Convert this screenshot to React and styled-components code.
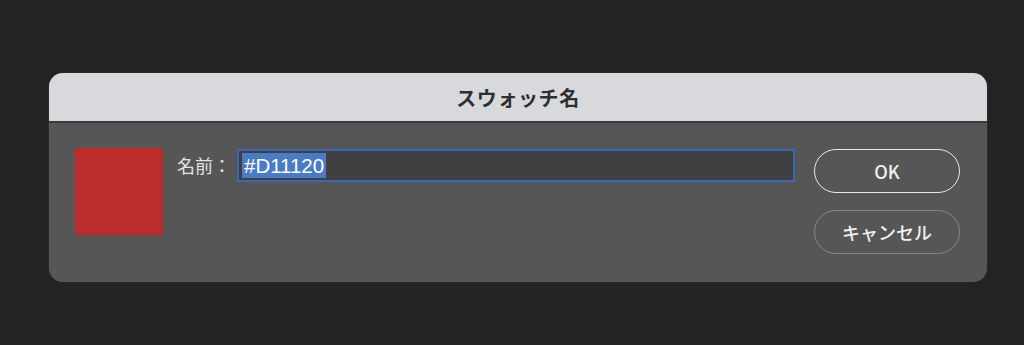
import styled, { createGlobalStyle } from "styled-components";

const Global = createGlobalStyle`
  html, body {
    margin: 0;
    padding: 0;
    background: #232323;
    font-family: "Noto Sans CJK JP", "Noto Sans", sans-serif;
  }
`;

const Page = styled.div`
  width: 1024px;
  height: 345px;
  padding: 73px 37px 0 49px;
  box-sizing: border-box;
`;

const Dialog = styled.div`
  width: 938px;
  height: 209px;
  border-radius: 14px;
  overflow: hidden;
  background: #565656;
  display: flex;
  flex-direction: column;
  box-shadow: 0 0 0 1px #2a2a2a;
`;

const TitleBar = styled.div`
  height: 48px;
  background: #d8d9dc;
  border-bottom: 2px solid #3a3a3a;
  display: flex;
  align-items: center;
  justify-content: center;
  font-size: 20px;
  font-weight: 700;
  color: #2f2f2f;
  letter-spacing: 0.6px;
`;

const Body = styled.div`
  display: flex;
  padding: 25px 27px 0 26px;
  gap: 14px;
`;

const Swatch = styled.div`
  width: 88px;
  height: 87px;
  background: ${({ color }) => color};
  flex-shrink: 0;
`;

const Field = styled.div`
  flex: 1;
  display: flex;
  align-items: flex-start;
  gap: 6px;
  padding-top: 1px;
`;

const Label = styled.label`
  color: #e2e2e2;
  font-size: 18px;
  line-height: 33px;
  white-space: nowrap;
`;

const Input = styled.div`
  flex: 1;
  height: 33px;
  box-sizing: border-box;
  border: 2px solid #3b66b4;
  background: #404040;
  display: flex;
  align-items: center;
  padding-left: 3px;
`;

const Selected = styled.span`
  background: #4a7bc4;
  color: #fff;
  font-family: "Liberation Sans", "Noto Sans CJK JP", sans-serif;
  font-size: 20.5px;
  line-height: 25px;
  padding: 0 2px;
`;

const Buttons = styled.div`
  display: flex;
  flex-direction: column;
  gap: 17px;
  margin-left: 5px;
  padding-top: 1px;
`;

const Button = styled.button`
  width: 146px;
  height: 44px;
  border-radius: 22px;
  background: transparent;
  border: 1.5px solid ${({ primary }) => (primary ? "#e8e8e8" : "#858585")};
  color: #f0f0f0;
  font-family: "Noto Sans CJK JP", "Liberation Sans", sans-serif;
  font-size: 18px;
  font-weight: 500;
  display: flex;
  align-items: center;
  justify-content: center;
  padding: 0;
`;

export default function App() {
  return (
    <>
      <Global />
      <Page>
        <Dialog>
          <TitleBar>スウォッチ名</TitleBar>
          <Body>
            <Swatch color="#bb2d2c" />
            <Field>
              <Label>名前：</Label>
              <Input>
                <Selected>#D11120</Selected>
              </Input>
            </Field>
            <Buttons>
              <Button primary>OK</Button>
              <Button>キャンセル</Button>
            </Buttons>
          </Body>
        </Dialog>
      </Page>
    </>
  );
}
